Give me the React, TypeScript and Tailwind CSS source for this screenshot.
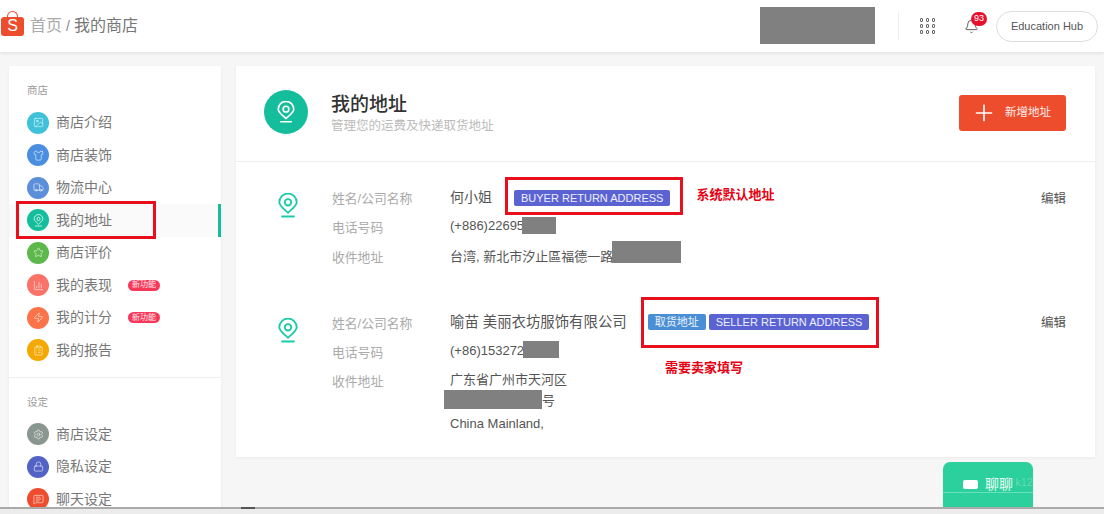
import { BarChart3, Bell, ClipboardList, Image, Lock, MessageSquareText, Plus, Settings, Shirt, Star, Truck, Zap } from "lucide-react";

const FONT = "font-['Liberation_Sans','Noto_Sans_CJK_SC',sans-serif]";

function Pin({ className }: { className?: string }) {
  return (
    <svg viewBox="0 0 24 27" fill="none" stroke="currentColor" strokeWidth="2" className={className}>
      <path d="M12 21.500C10.500 19.500 2.500 14.500 2.500 10a9.500 9.500 0 0 1 19 0C21.500 14.500 13.500 19.500 12 21.500z" strokeLinejoin="round" />
      <circle cx="12" cy="10" r="3.500" />
      <path d="M5.500 25.500h13" strokeLinecap="round" />
    </svg>
  );
}

const SHOP_ITEMS = [
  { label: "商店介绍", color: "bg-[#3fc1d9]", icon: Image },
  { label: "商店装饰", color: "bg-[#4a8ee0]", icon: Shirt },
  { label: "物流中心", color: "bg-[#5b8fd9]", icon: Truck },
  { label: "我的地址", color: "bg-[#14bd9c]", icon: null, active: true },
  { label: "商店评价", color: "bg-[#5cb84a]", icon: Star },
  { label: "我的表现", color: "bg-[#fa7268]", icon: BarChart3, badge: true },
  { label: "我的计分", color: "bg-[#fb7348]", icon: Zap, badge: true },
  { label: "我的报告", color: "bg-[#f5a800]", icon: ClipboardList },
];

const SETTING_ITEMS = [
  { label: "商店设定", color: "bg-[#8a9690]", icon: Settings },
  { label: "隐私设定", color: "bg-[#5262c5]", icon: Lock },
  { label: "聊天设定", color: "bg-[#ee4d2d]", icon: MessageSquareText },
];

type NavItem = { label: string; color: string; icon: typeof Image | null; active?: boolean; badge?: boolean };

function NavRow({ item }: { item: NavItem }) {
  const Icon = item.icon;
  return (
    <div className={`flex h-[32.500px] items-center pl-[18px] ${item.active ? "border-r-[3px] border-[#14bd9c] bg-[#fafafa]" : ""}`}>
      <span className={`flex h-[22px] w-[22px] items-center justify-center rounded-full text-white/80 ${item.color}`}>
        {Icon ? <Icon size={11} strokeWidth={1.5} /> : <Pin className="h-[13px] w-[11px]" />}
      </span>
      <span className="ml-[7px] text-[14px] text-[#777]">{item.label}</span>
      {item.badge && (
        <span className="ml-[16px] flex h-[11px] w-8 items-center justify-center rounded-full bg-[#f8375a] text-[8px] text-white/90">新功能</span>
      )}
    </div>
  );
}

function Field({ label, children, className }: { label: string; children: React.ReactNode; className?: string }) {
  return (
    <div className={`flex ${className ?? ""}`}>
      <span className="w-[118px] shrink-0 pt-[2px] text-[12.800px] leading-[20px] text-[#aaa]">{label}</span>
      <div className="min-w-0 flex-1 text-[13px] leading-[20px] text-[#555]">{children}</div>
    </div>
  );
}

function Tag({ color, children }: { color: string; children: React.ReactNode }) {
  return <span className={`flex h-4 items-center rounded-[2px] px-[7px] text-[11px] text-white/90 ${color}`}>{children}</span>;
}

export default function App() {
  return (
    <div className={`relative flex h-[514px] w-[1104px] flex-col overflow-hidden bg-[#f6f6f6] ${FONT}`}>
      {/* Header */}
      <header className="flex h-[52px] shrink-0 items-center bg-white pl-[1px] shadow-[0_1px_4px_rgba(0,0,0,0.1)]">
        <span className="relative flex h-[19px] w-[23px] items-center justify-center rounded-[3px] bg-[#ee4d2d] text-[16px] leading-none text-white">
          S
          <span className="absolute -top-[6px] left-[6px] h-[7px] w-[11px] rounded-t-full border-[1.500px] border-b-0 border-[#ee4d2d]" />
        </span>
        <span className="ml-[6px] text-[16px] text-[#aaa]">首页</span>
        <span className="mx-1 text-[14px] text-[#888]">/</span>
        <span className="text-[16px] text-[#777]">我的商店</span>
        <div className="ml-auto flex items-center pr-[6px]">
          <div className="mb-[2px] h-[37px] w-[115px] bg-[#808080]" />
          <div className="ml-[23px] h-7 w-px bg-[#eee]" />
          <div className="ml-[21px] grid grid-cols-3 gap-[2.500px]">
            {Array.from({ length: 9 }).map((_, i) => (
              <span key={i} className="h-[3.500px] w-[3.500px] rounded-[1px] border border-[#666]" />
            ))}
          </div>
          <div className="relative ml-[29px] text-[#555]">
            <Bell size={15} strokeWidth={1.5} />
            <span className="absolute -right-[8px] -top-[7px] flex h-[14px] w-[16px] items-center justify-center rounded-full bg-[#e8112d] text-[9px] text-white">93</span>
          </div>
          <div className="ml-[17px] flex h-[31px] w-[102px] items-center justify-center rounded-full border border-[#ddd] text-[11px] text-[#555]">Education Hub</div>
        </div>
      </header>

      {/* Body */}
      <div className="flex min-h-0 flex-1 gap-[15px] pl-[9px] pr-[9px] pt-[14px]">
        <aside className="w-[212px] shrink-0 overflow-hidden bg-white shadow-[0_1px_3px_rgba(0,0,0,0.05)]">
          <p className="pb-[9.500px] pl-[18px] pt-[17px] text-[10.500px] leading-[14px] text-[#999]">商店</p>
          {SHOP_ITEMS.map((item) => <NavRow key={item.label} item={item} />)}
          <div className="mt-[10.500px] border-t border-[#eee]" />
          <p className="pb-[9px] pl-[18px] pt-[17px] text-[10.500px] leading-[14px] text-[#999]">设定</p>
          {SETTING_ITEMS.map((item) => <NavRow key={item.label} item={item} />)}
        </aside>

        <main className="h-[391px] flex-1 bg-white shadow-[0_1px_3px_rgba(0,0,0,0.05)]">
          <div className="flex h-[96px] items-start border-b border-[#eee] pl-[28px] pr-[29px]">
            <span className="mt-[24px] flex h-[44px] w-[44px] items-center justify-center rounded-full bg-[#14bd9c] text-white">
              <Pin className="h-[22px] w-[20px]" />
            </span>
            <div className="ml-[23px] mt-[26px]">
              <h1 className="text-[19px] font-medium leading-[25px] text-[#333]">我的地址</h1>
              <p className="text-[12.500px] leading-[18px] text-[#bbb]">管理您的运费及快递取货地址</p>
            </div>
            <button className="ml-auto mt-[29px] flex h-9 w-[107px] items-center rounded-[3px] bg-[#ee4d2d] pl-[12px] text-[11.500px] text-white/90">
              <Plus size={26} strokeWidth={1.5} className="text-white" />
              <span className="ml-[8px]">新增地址</span>
            </button>
          </div>

          {/* First address */}
          <div className="flex pl-[41px] pr-[29px] pt-[25px]">
            <Pin className="mt-[6px] h-[25px] w-[22px] shrink-0 text-[#19cba6]" />
            <div className="ml-[33px] flex-1">
              <Field label="姓名/公司名称">
                <div className="flex items-center">
                  <span className="text-[14px] leading-[18px]">何小姐</span>
                  <span className="relative top-px ml-[22px]"><Tag color="bg-[#5b63d3]">BUYER RETURN ADDRESS</Tag></span>
                  <span className="relative -top-[2px] ml-[26px] text-[13px] font-bold text-[#e60012]">系统默认地址</span>
                  <span className="relative top-[2px] ml-auto text-[12.500px] text-[#555]">编辑</span>
                </div>
              </Field>
              <Field label="电话号码" className="mt-[7px]">
                <span className="flex items-center">(+886)22695<span className="relative -top-px -ml-[2px] h-[17px] w-[34px] bg-[#808080]" /></span>
              </Field>
              <Field label="收件地址" className="mt-[8px]">
                <span className="flex items-center">台湾, 新北市汐止區福德一路<span className="relative -left-px -top-[5px] h-[22px] w-[69px] bg-[#808080]" /></span>
              </Field>
            </div>
          </div>

          {/* Second address */}
          <div className="flex pl-[41px] pr-[29px] pt-[44px]">
            <Pin className="mt-[6px] h-[25px] w-[22px] shrink-0 text-[#19cba6]" />
            <div className="ml-[33px] flex-1">
              <Field label="姓名/公司名称">
                <div className="flex items-center">
                  <span className="text-[14.400px] leading-[18px]">喻苗 美丽衣坊服饰有限公司</span>
                  <span className="ml-[21px] flex gap-[3px]">
                    <Tag color="bg-[#4a8fd6]">取货地址</Tag>
                    <Tag color="bg-[#5b63d3]">SELLER RETURN ADDRESS</Tag>
                  </span>
                  <span className="relative top-px ml-auto text-[12.500px] text-[#555]">编辑</span>
                </div>
              </Field>
              <Field label="电话号码" className="mt-[7px]">
                <span className="flex items-center">(+86)153272<span className="relative -top-[2px] -ml-px h-[17px] w-[36px] bg-[#808080]" /></span>
              </Field>
              <Field label="收件地址" className="mt-[7px]">
                <p>广东省广州市天河区</p>
                <p className="-ml-[6px] mt-[1px] flex items-center"><span className="relative -top-[2px] h-[19px] w-[98px] bg-[#808080]" />号</p>
                <p className="mt-[3px]">China Mainland,</p>
              </Field>
              <p className="absolute left-[665px] top-[358px] text-[13px] font-bold text-[#e60012]">需要卖家填写</p>
            </div>
          </div>
        </main>
      </div>

      {/* Bottom strip */}
      <div className="h-[7px] shrink-0 border-t-2 border-[#aaa] bg-[#ececec]">
        <div className="-mt-[2px] ml-[241px] h-[2px] w-[14px] bg-[#555]" />
      </div>

      {/* Chat button */}
      <div className="absolute bottom-[7px] left-[943px] flex h-[45px] w-[90px] items-center justify-center rounded-t-[7px] bg-[#2bd09c] pb-[1px] text-[14px] text-white/90">
        <span className="mr-[7px] h-[9px] w-[15px] rounded-[2px] bg-white" />
        聊聊
        <span className="absolute right-0 top-[12px] text-[11px] text-white/25">k12</span>
        <span className="absolute inset-x-0 top-[30px] h-px bg-white/30" />
      </div>

      {/* Red annotation boxes */}
      <div className="absolute left-[16px] top-[201px] h-[38px] w-[140px] border-[3px] border-[#e8101c]" />
      <div className="absolute left-[505px] top-[177px] h-[38px] w-[178px] border-[3px] border-[#e8101c]" />
      <div className="absolute left-[641px] top-[297px] h-[51px] w-[238px] border-[3px] border-[#e8101c]" />
    </div>
  );
}
